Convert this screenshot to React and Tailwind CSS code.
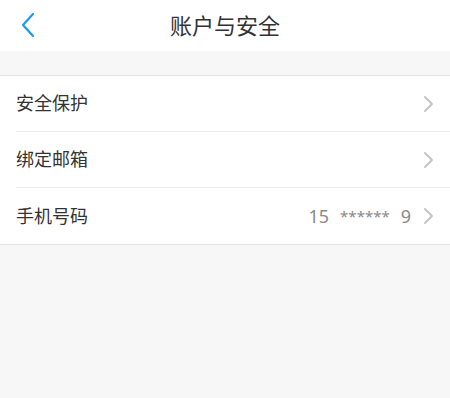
function Chevron() {
  return (
    <svg width="11" height="18" viewBox="0 0 11 18" className="shrink-0">
      <path d="M2 2 L9 9 L2 16" fill="none" stroke="#c4c4c4" strokeWidth="2" strokeLinecap="round" strokeLinejoin="round" />
    </svg>
  );
}

function Row({ label, children, divider }) {
  return (
    <div className="pl-4">
      <div className={`flex h-[56px] items-center pr-[16px] ${divider ? "border-b border-[#ececec]" : ""}`}>
        <span className="flex-1 text-[18px] text-[#333]">{label}</span>
        {children}
        <Chevron />
      </div>
    </div>
  );
}

export default function App() {
  return (
    <div
      className="h-[398px] w-[450px] bg-[#f7f7f7]"
      style={{ fontFamily: '"Noto Sans", "Noto Sans CJK SC", sans-serif' }}
    >
      <div className="relative flex h-[51px] items-center justify-center bg-white">
        <button className="absolute left-[20px] top-[12px]">
          <svg width="16" height="26" viewBox="0 0 16 26">
            <path d="M13 2 L3 13 L13 24" fill="none" stroke="#1a9bf0" strokeWidth="2.2" strokeLinecap="round" strokeLinejoin="round" />
          </svg>
        </button>
        <h1 className="text-[22px] text-[#333]">账户与安全</h1>
      </div>
      <div className="h-[24px]" />
      <div className="border-y border-[#e4e4e4] bg-white">
        <Row label="安全保护" divider />
        <Row label="绑定邮箱" divider />
        <Row label="手机号码">
          <div className="mr-[12px] flex items-center gap-[11px] text-[18px] text-[#8a8a8a]">
            <span>15</span>
            <span className="text-[15px]">******</span>
            <span>9</span>
          </div>
        </Row>
      </div>
    </div>
  );
}
